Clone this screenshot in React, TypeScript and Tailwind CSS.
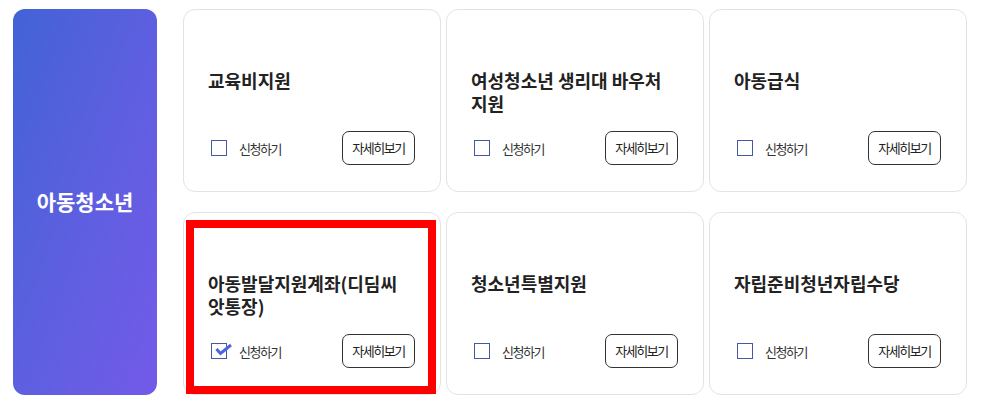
import React from "react";

type Item = { title: React.ReactNode; checked?: boolean; highlight?: boolean };

const items: Item[] = [
  { title: "교육비지원" },
  {
    title: (
      <>
        여성청소년 생리대 바우처
        <br />
        지원
      </>
    ),
  },
  { title: "아동급식" },
  {
    title: (
      <>
        아동발달지원계좌(디딤씨
        <br />
        앗통장)
      </>
    ),
    checked: true,
    highlight: true,
  },
  { title: "청소년특별지원" },
  { title: "자립준비청년자립수당" },
];

function Card({ item }: { item: Item }) {
  return (
    <div className="relative h-[183px] rounded-[12px] border border-[#e3e3e3] bg-white pl-[24px] pr-[25px] pt-[59px] flex flex-col">
      <div className="h-[46px] text-[18px] leading-[23px] font-bold text-[#222222] whitespace-nowrap">
        {item.title}
      </div>
      <div className="mt-[16px] flex items-center justify-between">
        <div className="flex items-center ml-[3px]">
          <div className="relative w-[16px] h-[16px] border border-[#4458a6] bg-white">
            {item.checked && (
              <svg
                className="absolute left-[-1px] top-[-1px] overflow-visible"
                width="22"
                height="16"
                viewBox="0 0 22 16"
              >
                <polyline
                  points="5.5,6 9.5,10.5 20,2"
                  fill="none"
                  stroke="#4a66dc"
                  strokeWidth="3"
                  strokeLinejoin="miter"
                />
              </svg>
            )}
          </div>
          <span className="ml-[12px] text-[13px] tracking-[-1.5px] text-[#333333] leading-none">
            신청하기
          </span>
        </div>
        <button className="w-[73px] h-[34px] rounded-[7px] border border-[#333333] bg-white text-[13px] tracking-[-1.5px] text-[#222222] flex items-center justify-center">
          자세히보기
        </button>
      </div>
      {item.highlight && (
        <div className="pointer-events-none absolute left-[2px] top-[7px] w-[250px] h-[174px] border-[8px] border-[#ff0000]" />
      )}
    </div>
  );
}

export default function App() {
  return (
    <div className="w-[997px] h-[406px] bg-white flex pl-[13px] pt-[9px] font-['Noto_Sans_CJK_KR','Noto_Sans',sans-serif]">
      <div className="w-[144px] h-[386px] rounded-[12px] bg-gradient-to-br from-[#4163d6] to-[#735ae9] flex items-center justify-center">
        <span className="text-white text-[21px] font-bold">아동청소년</span>
      </div>
      <div className="ml-[26px] grid grid-cols-[258px_258px_258px] gap-x-[5px] gap-y-[20px] content-start">
        {items.map((it, i) => (
          <Card key={i} item={it} />
        ))}
      </div>
    </div>
  );
}
